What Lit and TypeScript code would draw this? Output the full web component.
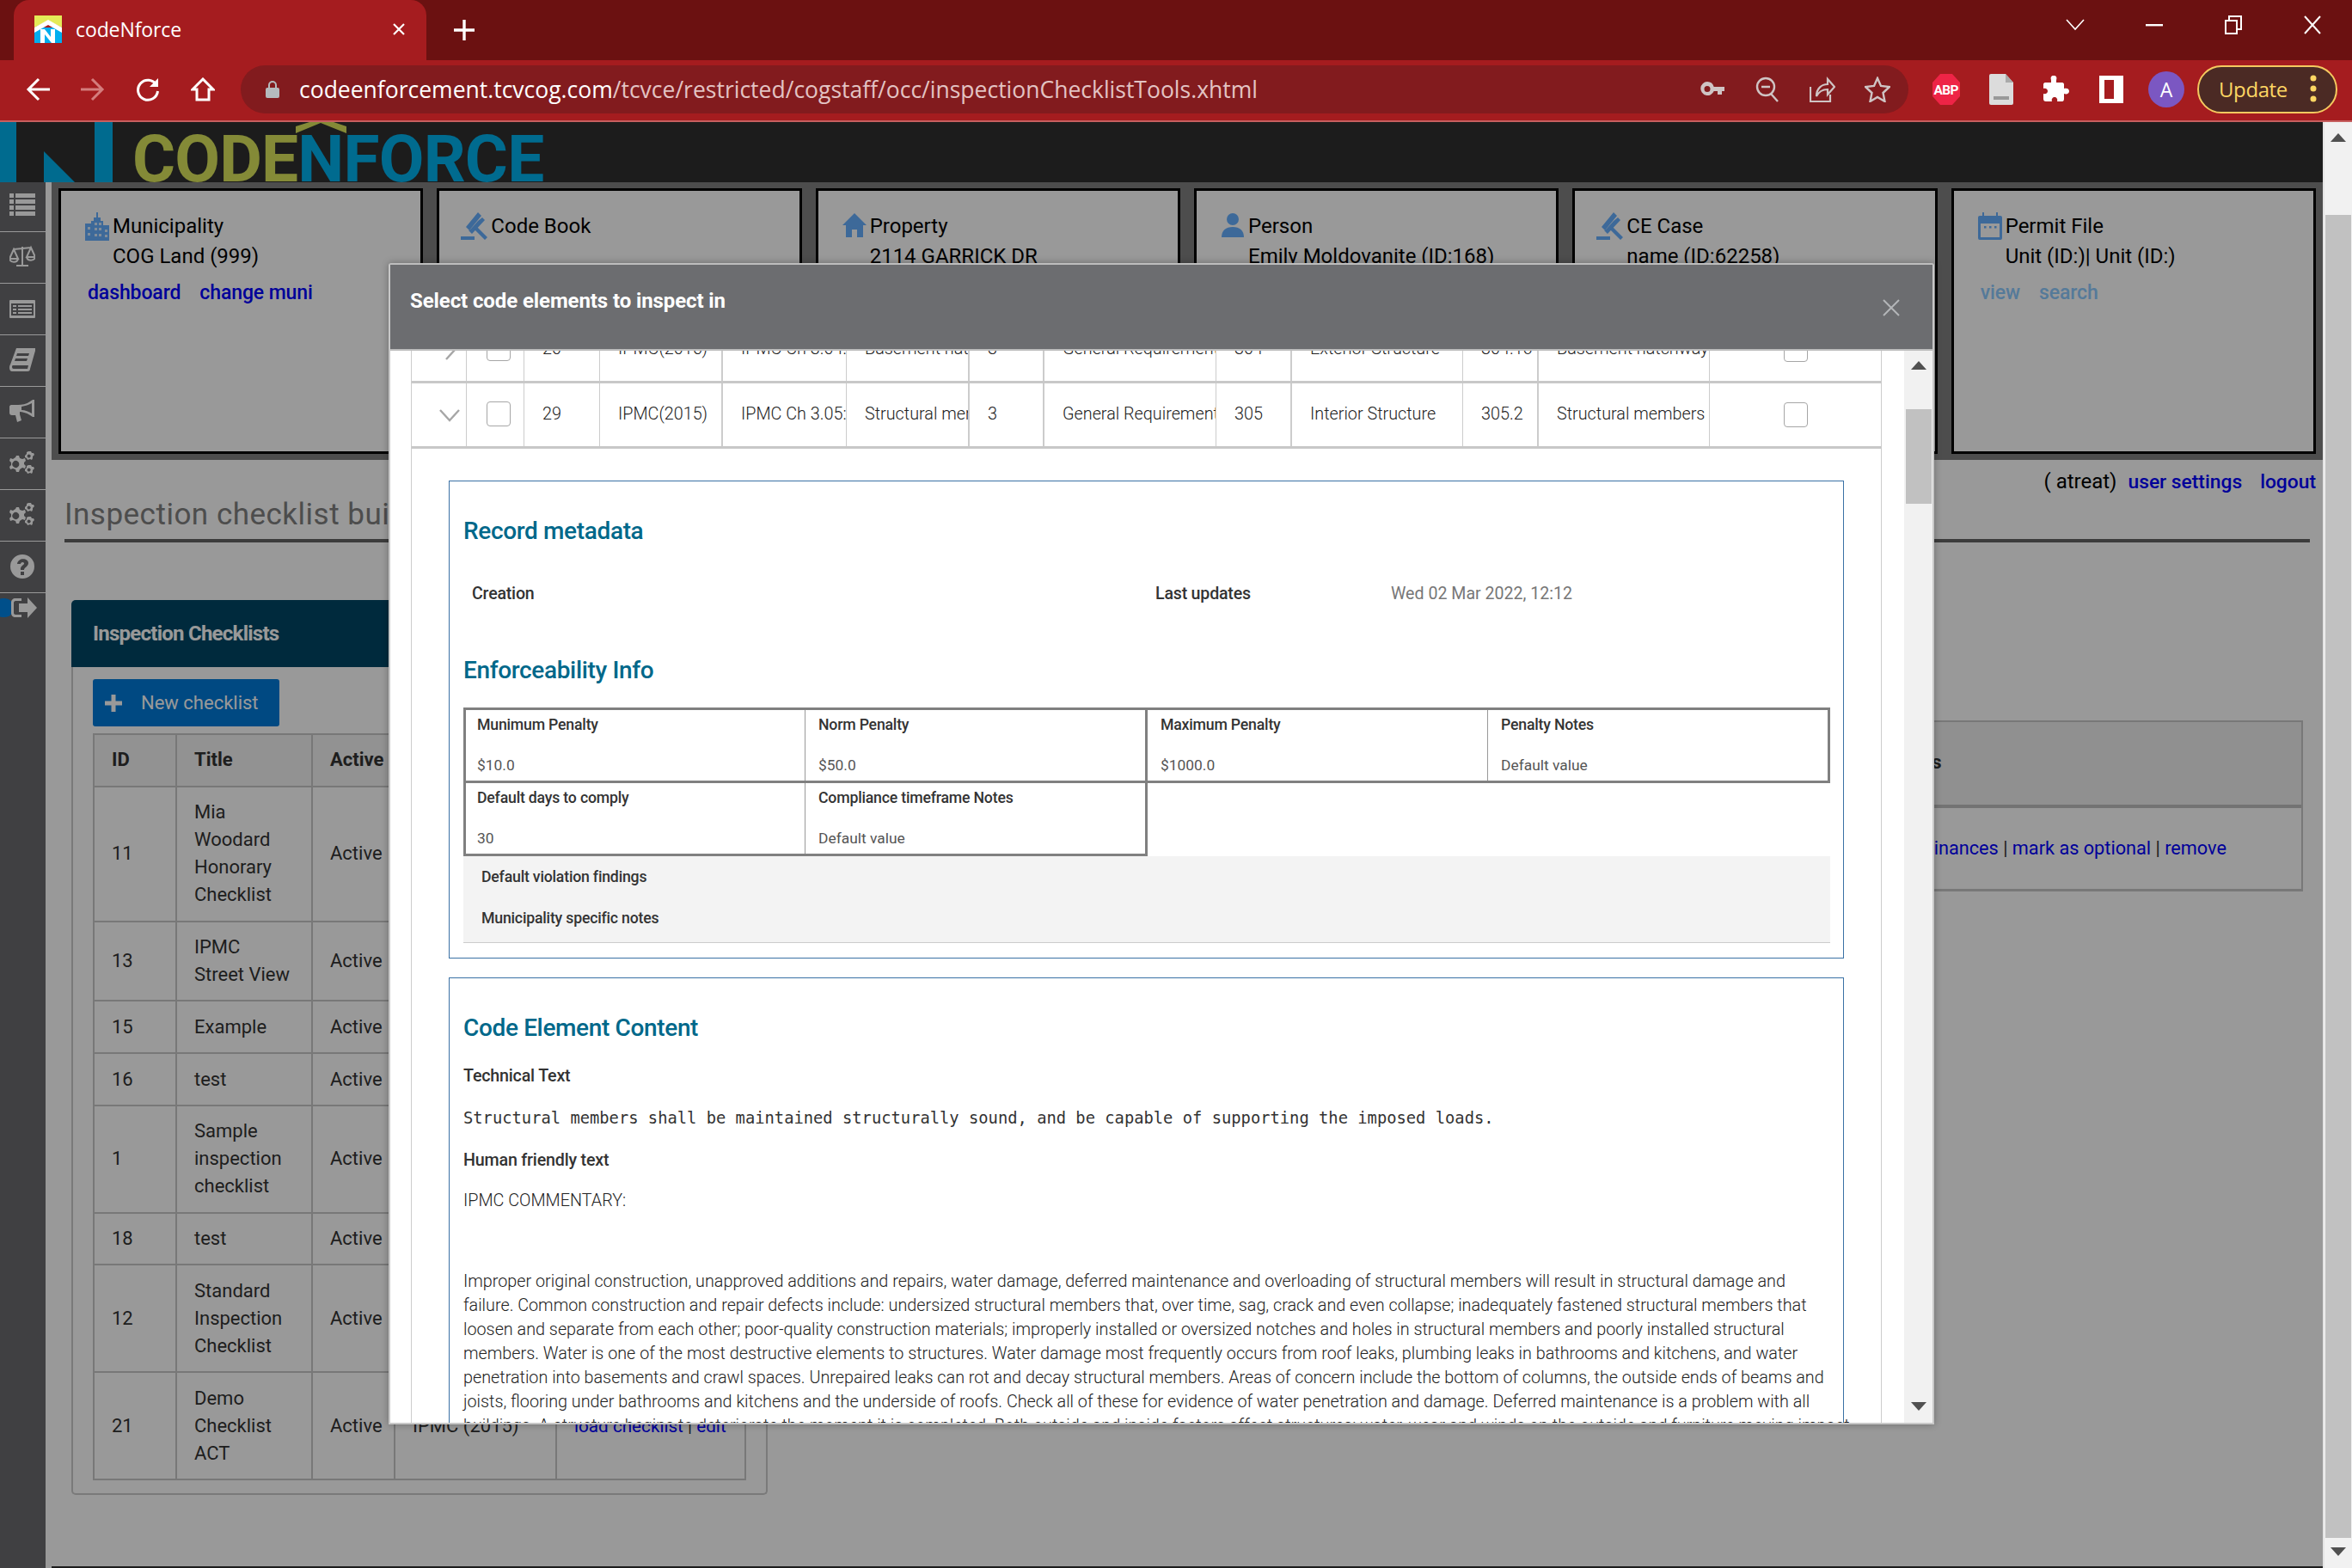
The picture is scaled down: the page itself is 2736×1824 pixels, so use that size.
import { LitElement, html, css, svg } from 'lit';
import { customElement } from 'lit/decorators.js';

const cards = [
  { icon: 'city', title: 'Municipality', value: 'COG Land (999)', links: ['dashboard', 'change muni'], dim: false },
  { icon: 'gavel', title: 'Code Book', value: '', links: [], dim: false },
  { icon: 'home', title: 'Property', value: '2114 GARRICK DR', links: [], dim: false },
  { icon: 'user', title: 'Person', value: 'Emily Moldovanite (ID:168)', links: [], dim: false },
  { icon: 'gavel', title: 'CE Case', value: 'name (ID:62258)', links: [], dim: false },
  { icon: 'calendar', title: 'Permit File', value: 'Unit (ID:)| Unit (ID:)', links: ['view', 'search'], dim: true },
];

const checklists = [
  ['11', ['Mia', 'Woodard', 'Honorary', 'Checklist']],
  ['13', ['IPMC', 'Street View']],
  ['15', ['Example']],
  ['16', ['test']],
  ['1', ['Sample', 'inspection', 'checklist']],
  ['18', ['test']],
  ['12', ['Standard', 'Inspection', 'Checklist']],
  ['21', ['Demo', 'Checklist', 'ACT']],
] as [string, string[]][];

const rowAbove = ['20', 'IPMC(2015)', 'IPMC Ch 3.04:', 'Basement hatchways', '3', 'General Requirements', '304', 'Exterior Structure', '304.16', 'Basement hatchways'];
const rowOpen = ['29', 'IPMC(2015)', 'IPMC Ch 3.05:', 'Structural members', '3', 'General Requirements', '305', 'Interior Structure', '305.2', 'Structural members'];

const commentary = [
  'Improper original construction, unapproved additions and repairs, water damage, deferred maintenance and overloading of structural members will result in structural damage and',
  'failure. Common construction and repair defects include: undersized structural members that, over time, sag, crack and even collapse; inadequately fastened structural members that',
  'loosen and separate from each other; poor-quality construction materials; improperly installed or oversized notches and holes in structural members and poorly installed structural',
  'members. Water is one of the most destructive elements to structures. Water damage most frequently occurs from roof leaks, plumbing leaks in bathrooms and kitchens, and water',
  'penetration into basements and crawl spaces. Unrepaired leaks can rot and decay structural members. Areas of concern include the bottom of columns, the outside ends of beams and',
  'joists, flooring under bathrooms and kitchens and the underside of roofs. Check all of these for evidence of water penetration and damage. Deferred maintenance is a problem with all',
  'buildings. A structure begins to deteriorate the moment it is completed. Both outside and inside factors affect structures: water, wear and winds on the outside and furniture moving impact',
];

const cardIcons: Record<string, unknown> = {
  city: svg`<path d="M0 13h7v-3h3V6h3V0h2v6h3v4h3v5h7v18H0z"/><g fill="#fff" opacity=".75"><rect x="3" y="17" width="3" height="3"/><rect x="3" y="24" width="3" height="3"/><rect x="11" y="12" width="3" height="3"/><rect x="16" y="12" width="3" height="3"/><rect x="11" y="18" width="3" height="3"/><rect x="16" y="18" width="3" height="3"/><rect x="11" y="25" width="3" height="3"/><rect x="16" y="25" width="3" height="3"/><rect x="23" y="20" width="3" height="3"/><rect x="23" y="26" width="3" height="3"/></g>`,
  gavel: svg`<path d="M21 0l4 4-14 17-4-4zM26 6l3 3-15 16-3-3-1 0 3-3 8-9z"/><path d="M18 15l14 14-3 3-14-14zM1 28h16v4H1z"/>`,
  home: svg`<path d="M14 1L0 15h4v14h7v-9h6v9h7V15h4z"/>`,
  user: svg`<circle cx="14" cy="8" r="7"/><path d="M1 29c0-8 5-12 13-12s13 4 13 12z"/>`,
  calendar: svg`<path d="M5 0h2v4h14V0h2v4h3a2 2 0 012 2v24a2 2 0 01-2 2H2a2 2 0 01-2-2V6a2 2 0 012-2h3zM3 13v16h22V13z"/><g><rect x="7" y="16" width="2.5" height="2.5"/><rect x="13" y="16" width="2.5" height="2.5"/><rect x="19" y="16" width="2.5" height="2.5"/></g>`,
};

const sideIcons = [
  svg`<path d="M0 2h5v5H0zM7 2h23v5H7zM0 9h5v5H0zM7 9h23v5H7zM0 16h5v5H0zM7 16h23v5H7zM0 23h5v5H0zM7 23h23v5H7z"/>`,
  svg`<g fill="none" stroke="currentColor" stroke-width="2"><path d="M15 3v21M8 25h14M5 6l20-2M5 6l-5 11h10zM25 4l-5 11h10z"/><path d="M0 17c1 5 9 5 10 0M20 15c1 5 9 5 10 0"/></g>`,
  svg`<path fill-rule="evenodd" d="M1 5h28a1 1 0 011 1v19a1 1 0 01-1 1H1a1 1 0 01-1-1V6a1 1 0 011-1zm1 4v14h26V9zm2 2h4v2H4zm6 0h16v2H10zm-6 4h4v2H4zm6 0h16v2H10zm-6 4h4v2H4zm6 0h16v2H10z"/>`,
  svg`<path fill-rule="evenodd" d="M8 1h22v3l-6 21c0 2-1 3-3 3H3c-2 0-3-2-3-4 0-1 0-3 1-4zm1 6l-1 3h14l1-3zm-2 6l-1 3h14l1-3zM3 22c0 1 0 3 2 3h16l1-4H5c-1 0-2 0-2 1z"/>`,
  svg`<path d="M27 1h2v20h-2l-3-2c-5-3-9-4-12-4v3l2 7-5 2-2-8-4 0c-2 0-3-1-3-3V9c0-1 1-2 2-2h8c4 0 10-1 14-4zm-1 4c-3 2-8 3-12 4v4c4 0 9 2 12 4zM30 8c1 1 1 5 0 6z"/>`,
  svg`<path d="M11 6l1 3 3 1 3-1 1 3-2 2v2l2 2-1 3-3-1-3 2-1 3H8l-1-3-3-1-3 1-1-3 2-2v-3l-2-2 1-3 3 1 3-2 1-2zm-1 7a4 4 0 100 6 4 4 0 000-6zM25 1l1 2 2 0 1 2-2 2 0 2-1 2-2-1-3 1-1-2-2-1 0-2 2-2 0-2 2-1zm-1 4a2 2 0 100 3 2 2 0 000-3zM25 17l1 2 2 0 1 2-2 2 0 2-1 2-2-1-3 1-1-2-2-1 0-2 2-2 0-2 2-1zm-1 4a2 2 0 100 3 2 2 0 000-3z"/>`,
  svg`<path d="M11 6l1 3 3 1 3-1 1 3-2 2v2l2 2-1 3-3-1-3 2-1 3H8l-1-3-3-1-3 1-1-3 2-2v-3l-2-2 1-3 3 1 3-2 1-2zm-1 7a4 4 0 100 6 4 4 0 000-6zM25 1l1 2 2 0 1 2-2 2 0 2-1 2-2-1-3 1-1-2-2-1 0-2 2-2 0-2 2-1zm-1 4a2 2 0 100 3 2 2 0 000-3zM25 17l1 2 2 0 1 2-2 2 0 2-1 2-2-1-3 1-1-2-2-1 0-2 2-2 0-2 2-1zm-1 4a2 2 0 100 3 2 2 0 000-3z"/>`,
  svg`<path fill-rule="evenodd" d="M15 1a14 14 0 110 28 14 14 0 010-28zm-6 11h4c0-2 3-3 4-1 1 2-5 3-4 8h4c0-3 5-4 5-8 0-6-12-7-13 1zm4 9v4h4v-4z"/>`,
  svg`<path d="M12 4H5C2 4 0 6 0 9v12c0 3 2 5 5 5h7v-3H5c-1 0-2-1-2-2V9c0-1 1-2 2-2h7zM19 3l11 12-11 12v-7H9v-10h10z"/>`,
];

@customElement('app-root')
export class AppRoot extends LitElement {
  static styles = css`
    :host {
      display: block;
      width: 2736px;
      height: 1824px;
      overflow: hidden;
      font-family: Roboto, "Liberation Sans", sans-serif;
      color: #333;
      background: #fff;
    }
    svg { display: block; }

    /* browser chrome */
    .tabstrip {
      height: 70px;
      background: #6b1111;
      display: flex;
      align-items: flex-end;
      color: #fff;
    }
    .tab {
      width: 480px;
      height: 70px;
      margin-left: 16px;
      background: #a51c1f;
      border-radius: 18px 18px 0 0;
      display: flex;
      align-items: center;
      box-sizing: border-box;
      padding: 0 24px 2px 24px;
      font: 23px "Open Sans", sans-serif;
      letter-spacing: -0.1px;
    }
    .tab-title { margin-left: 16px; flex: 1; }
    .newtab { width: 88px; height: 70px; display: flex; align-items: center; justify-content: center; }
    .winbtns { margin-left: auto; display: flex; height: 70px; }
    .winbtn { width: 92px; display: flex; align-items: center; justify-content: center; padding-bottom: 12px; box-sizing: border-box; }

    .toolbar {
      height: 72px;
      background: #a51c1f;
      border-bottom: 2px solid #c65f5f;
      box-sizing: border-box;
      display: flex;
      align-items: flex-start;
      padding: 6px 0 0 12px;
    }
    .tool { width: 64px; height: 56px; display: flex; align-items: center; justify-content: center; flex: none; }
    .omnibox {
      width: 1940px;
      height: 56px;
      margin-left: 12px;
      border-radius: 28px;
      background: #821b1e;
      display: flex;
      align-items: center;
      box-sizing: border-box;
      padding: 0 4px 0 29px;
    }
    .url {
      margin-left: 23px;
      flex: 1;
      font: 26.5px "Open Sans", sans-serif;
      letter-spacing: 0;
      color: #e3c3c3;
      white-space: nowrap;
    }
    .url b { font-weight: 400; color: #fff; }
    .exts { margin-left: 12px; display: flex; }
    .avatar {
      width: 42px; height: 42px; border-radius: 50%;
      background: #7b57c2; color: #fff;
      display: flex; align-items: center; justify-content: center;
      font: 23px "Open Sans", sans-serif;
    }
    .update {
      width: 163px; height: 56px;
      margin-left: 4px;
      box-sizing: border-box;
      border: 2px solid #f5c95f;
      border-radius: 28px;
      background: #4b2a24;
      color: #fdd663;
      display: flex; align-items: center;
      padding: 0 0 2px 23px;
      font: 24px "Open Sans", sans-serif;
      letter-spacing: -0.4px;
    }
    .update svg { margin-left: 26px; }

    /* page */
    .viewport { display: flex; height: 1682px; }
    .page { position: relative; width: 2702px; flex: none; overflow: hidden; background: #fff; }
    .pagebar {
      flex: 1;
      background: #f1f1f1;
      border-left: 2px solid #e4e4e4;
      display: flex;
      flex-direction: column;
      align-items: center;
    }
    .arrow-up { width: 0; height: 0; border: 9px solid transparent; border-top: 0; border-bottom: 10px solid #505050; }
    .arrow-down { width: 0; height: 0; border: 9px solid transparent; border-bottom: 0; border-top: 10px solid #505050; }
    .pagebar .arrow-up { margin-top: 13px; }
    .pagebar .thumb { width: 30px; height: 1539px; margin: 85px 0 0; background: #c1c1c1; }
    .pagebar .arrow-down { margin-top: 11px; }

    .masthead {
      height: 70px;
      box-sizing: border-box;
      background: #2f2f2f;
      display: flex;
      overflow: hidden;
      position: relative;
    }
    .masthead svg { position: absolute; left: 0; top: 0; }
    .wordmark {
      margin: 4px 0 0 154px;
      font: 700 76.5px/78px Roboto, sans-serif;
      letter-spacing: -0.8px;
      color: #00b2ee;
    }
    .wordmark span { color: #dce65d; }

    .layout { display: flex; height: 1612px; }
    .side { width: 53px; flex: none; background: #6b6b6e; color: #fff; }
    .side-item {
      height: 60px;
      border-bottom: 1px solid #fff;
      box-sizing: border-box;
      display: flex;
      align-items: center;
      padding: 0 0 2px 11px;
      position: relative;
    }
    .side-item:nth-child(1) { height: 58px; padding-bottom: 5px; }
    .side-item:last-child { border: 0; height: 36px; padding-left: 13px; }
    .side-pill { position: absolute; left: -8px; top: 6px; width: 24px; height: 22px; border-radius: 11px; background: #0084e6; }
    .side-item svg { position: relative; }

    .main { flex: 1; min-width: 0; margin-left: 7px; display: flex; flex-direction: column; }
    .band {
      height: 323px;
      flex: none;
      background: #808080;
      box-sizing: border-box;
      padding: 7px 8px;
      display: grid;
      grid-template-columns: repeat(6, 1fr);
      gap: 16px;
    }
    .card {
      border: 3px solid #000;
      background: #fff;
      color: #000;
      font-size: 24px;
      line-height: 35px;
      padding-top: 24px;
    }
    .card-head { display: flex; align-items: center; padding-left: 28px; color: #000; }
    .card-head svg { margin-right: 4px; color: #66b0ff; fill: currentColor; }
    .card-head svg.wide { margin-left: -4px; }
    .card-value { padding-left: 60px; }
    .card-links { display: flex; gap: 22px; margin-top: 7px; padding-left: 31px; font-size: 23px; font-weight: 500; letter-spacing: -0.1px; color: #00f; }
    .card-links.dim { color: #8ecbff; gap: 22px; }

    .userline {
      display: flex;
      justify-content: flex-end;
      gap: 13px;
      height: 50px;
      flex: none;
      align-items: center;
      padding-right: 8px;
      font-size: 24px;
      color: #000;
      box-sizing: border-box;
    }
    .userline a { color: #00f; font-size: 22.8px; font-weight: 500; }
    .userline a + a { margin-left: 8px; }
    .title {
      margin: -15px 15px 0 15px;
      height: 57px;
      flex: none;
      font-size: 35px;
      font-weight: 400;
      line-height: 58px;
      color: #808080;
      border-bottom: 4px solid #646464;
      letter-spacing: 0.5px;
    }
    .columns { display: flex; margin-top: 67px; justify-content: space-between; padding: 0 23px; }
    .panel { width: 810px; flex: none; }
    .panel-head {
      height: 78px;
      background: #004766;
      border-radius: 5px 5px 0 0;
      color: #fff;
      font-size: 24px;
      font-weight: 700;
      padding-left: 25px;
      line-height: 78px;
      letter-spacing: -0.75px;
    }
    .panel-body {
      border: 2px solid #ccc;
      border-top: 0;
      border-radius: 0 0 5px 5px;
      padding: 14px 25px 15px 23px;
    }
    .new-btn {
      width: 217px; height: 55px;
      border-radius: 3px;
      background: #007ad9;
      color: #fff;
      display: flex;
      align-items: center;
      font-size: 22px;
      font-weight: 400;
      box-sizing: border-box;
      padding-left: 14px;
      gap: 22px;
      margin-bottom: 8px;
    }
    table { border-collapse: collapse; table-layout: fixed; width: 758px; font-size: 22px; line-height: 32px; font-weight: 400; color: #333; }
    th, td { border: 2px solid #c8c8c8; padding: 13.4px 20px; text-align: left; white-space: nowrap; overflow: hidden; }
    th { background: #f4f4f4; font-weight: 700; }
    td.links { font-size: 20.7px; }
    td a { color: #00f; }
    .right-table { width: 1400px; flex: none; align-self: flex-start; margin-top: 140px; border: 2px solid #c8c8c8; border-bottom-width: 3px; }
    .right-head { height: 96px; background: #f0f0f0; border-bottom: 4px solid #c0c0c0; font-weight: 700; font-size: 22px; line-height: 94px; padding-left: 906px; color: #333; }
    .right-row { height: 94px; line-height: 94px; font-size: 21.7px; padding-left: 892px; white-space: nowrap; }
    .right-row a { color: #00f; }
    .footer { margin-top: auto; height: 2px; flex: none; background: #2f2f2f; }

    .scrim { position: absolute; inset: 0; background: rgba(0, 0, 0, 0.4); }

    /* dialog */
    .dialog {
      position: absolute;
      left: 452px;
      top: 164px;
      width: 1798px;
      height: 1351px;
      box-sizing: border-box;
      border: 2px solid #c8c8c8;
      border-top-color: #bdbdbd;
      border-radius: 3px 3px 0 0;
      background: #fff;
      display: flex;
      flex-direction: column;
      box-shadow: 0 0 8px rgba(0, 0, 0, 0.3);
    }
    .dialog-head {
      height: 100px;
      flex: none;
      background: #6c6d70;
      color: #fff;
      position: relative;
      padding: 27px 23px 0;
      box-sizing: border-box;
      font-size: 24px;
      font-weight: 700;
      letter-spacing: -0.1px;
      line-height: 30px;
      border-bottom: 2px solid #bdbdbd;
    }
    .dialog-close { position: absolute; right: 38px; top: 40px; }
    .dialog-body { flex: 1; min-height: 0; display: flex; }
    .sheet { width: 1761px; flex: none; overflow: hidden; padding: 0 26px 0 24px; box-sizing: border-box; }
    .sheet-inner { border: solid #ccc; border-width: 0 1px; margin-top: -38px; height: 1400px; box-sizing: border-box; }
    .dialog-bar { flex: 1; background: #f1f1f1; display: flex; flex-direction: column; align-items: center; }
    .dialog-bar .arrow-up { margin-top: 12px; }
    .dialog-bar .thumb { width: 30px; height: 110px; margin-top: 46px; background: #c1c1c1; }
    .dialog-bar .arrow-down { margin-top: auto; margin-bottom: 14px; }

    .row {
      height: 76px;
      box-sizing: border-box;
      display: grid;
      grid-template-columns: 64px 67px 88px 143px 144px 143px 87px 200px 88px 199px 88px 199px 1fr;
      border-bottom: 3px solid #c8c8c8;
      font-size: 19.8px;
      font-weight: 300;
      color: #222;
    }
    .cell {
      border-right: 1px solid #ccc;
      padding: 0 0 2px 21px;
      display: flex;
      align-items: center;
      overflow: hidden;
      white-space: nowrap;
      box-sizing: border-box;
    }
    .cell:nth-child(4), .cell:nth-child(6), .cell:nth-child(7), .cell:nth-child(9), .cell:nth-child(11) { border-right-width: 2px; }
    .cell:last-child { border-right: 0; justify-content: center; padding: 0; }
    .cell.chevron { justify-content: flex-end; padding: 0 7px 0 0; }
    .cell.tick { justify-content: flex-start; padding: 0 0 2px 23px; }
    .check { width: 28px; height: 29px; box-sizing: border-box; border: 1px solid #a6a6a6; border-radius: 4px; background: #fff; }

    .box { margin: 0 43px; border: 1px solid #3a71a5; padding: 0 16px; }
    .box-meta { margin-top: 37px; height: 556px; box-sizing: border-box; padding-top: 42px; }
    .box-code { margin-top: 22px; padding-top: 42px; }
    h2 { margin: 0; font-size: 28px; line-height: 32px; font-weight: 500; color: #00688a; letter-spacing: -0.35px; }
    .meta { margin-top: 45px; display: grid; grid-template-columns: 795px 274px 1fr; padding-left: 10px; font-size: 19.6px; line-height: 24px; }
    .meta b, .strong { font-weight: 500; color: #333; letter-spacing: -0.2px; }
    .meta span { color: #777; }
    .box-meta h2 + .meta + h2 { margin-top: 61px; }

    .pens { margin-top: 27px; }
    .pen-row { display: grid; grid-template-columns: 395px 398px 396px 1fr; border: 3px solid #808080; height: 88px; box-sizing: border-box; width: 1590px; }
    .pen-row.short { grid-template-columns: 395px 1fr; border-top: 0; width: 796px; height: 85px; }
    .pen-cell { display: flex; flex-direction: column; justify-content: space-between; padding: 7px 0 8px 15px; border-right: 1px solid #999; line-height: 20px; box-sizing: border-box; }
    .pen-cell:first-child { padding-left: 13px; }
    .pen-cell:nth-child(2) { border-right: 3px solid #808080; }
    .pen-cell:last-child { border-right: 0; }
    .short .pen-cell:nth-child(2) { border-right: 0; }
    .pen-cell b { font-size: 17.7px; font-weight: 500; color: #333; letter-spacing: -0.2px; }
    .pen-cell span { color: #555; font-size: 17.4px; }
    .notes { background: #f3f3f3; border-bottom: 1px solid #ccc; height: 101px; width: 1590px; box-sizing: border-box; padding: 12px 0 0 21px; font-size: 17.7px; font-weight: 500; line-height: 24px; color: #333; letter-spacing: -0.2px; }
    .notes div + div { margin-top: 24px; }

    .strong { display: block; font-size: 19.7px; line-height: 24px; }
    .strong.first { margin-top: 28px; }
    .mono { font: 18.8px/24px "DejaVu Sans Mono", monospace; color: #333; margin: 25px 0; white-space: nowrap; }
    .commentary-head { font-size: 19.8px; line-height: 24px; margin-top: 23px; font-weight: 300; color: #222; }
    .commentary { margin-top: 68px; font-size: 19.8px; line-height: 28px; font-weight: 300; color: #222; white-space: nowrap; }
  `;

  renderCells(cells: string[], open: boolean) {
    return html`
      <div class="cell chevron">
        ${open
          ? html`<svg width="24" height="24" viewBox="0 0 24 24" fill="none" stroke="#a6a6a6" stroke-width="2.4"><path d="M1 6l11 12L23 6"/></svg>`
          : html`<svg width="24" height="24" viewBox="0 0 24 24" fill="none" stroke="#a6a6a6" stroke-width="2.4"><path d="M8 1l10 11L8 23"/></svg>`}
      </div>
      <div class="cell tick"><div class="check"></div></div>
      ${cells.map((c) => html`<div class="cell">${c}</div>`)}
      <div class="cell"><div class="check"></div></div>
    `;
  }

  renderChrome() {
    return html`
      <div class="tabstrip">
        <div class="tab">
          <svg width="32" height="32" viewBox="0 0 32 32">
            <rect y="14" width="32" height="18" fill="#00aeef"/>
            <path d="M0 14L16 6l16 8V0H0z" fill="#e4ea58"/>
            <path d="M0 14L16 5l16 9v6L16 11 0 20z" fill="#fff"/>
            <path d="M7 32V16h5l7 9v-9h5v16h-4l-8-10v10z" fill="#fff"/>
          </svg>
          <span class="tab-title">codeNforce</span>
          <svg width="16" height="16" viewBox="0 0 16 16" stroke="#fff" stroke-width="2.2"><path d="M2 2l12 12M14 2L2 14"/></svg>
        </div>
        <div class="newtab">
          <svg width="24" height="24" viewBox="0 0 24 24" stroke="#fff" stroke-width="3.4"><path d="M12 0v24M0 12h24"/></svg>
        </div>
        <div class="winbtns">
          <div class="winbtn"><svg width="22" height="14" viewBox="0 0 22 14" fill="none" stroke="#fff" stroke-width="1.6"><path d="M1 1l10 11L21 1"/></svg></div>
          <div class="winbtn"><svg width="20" height="3" viewBox="0 0 20 3" fill="#fff"><rect width="20" height="2.4"/></svg></div>
          <div class="winbtn"><svg width="20" height="22" viewBox="0 0 20 22" fill="none" stroke="#fff" stroke-width="2"><path d="M1 6h13v15H1zM5 6V1h14v15h-5"/></svg></div>
          <div class="winbtn"><svg width="20" height="22" viewBox="0 0 20 22" fill="none" stroke="#fff" stroke-width="2"><path d="M1 1l18 20M19 1L1 21"/></svg></div>
        </div>
      </div>
      <div class="toolbar">
        <div class="tool"><svg width="28" height="28" viewBox="0 0 28 28" fill="none" stroke="#fff" stroke-width="3"><path d="M28 14H3M15 2L3 14l12 12"/></svg></div>
        <div class="tool"><svg width="28" height="28" viewBox="0 0 28 28" fill="none" stroke="#d47d7d" stroke-width="3"><path d="M0 14h25M13 2l12 12-12 12"/></svg></div>
        <div class="tool"><svg width="28" height="28" viewBox="0 0 28 28" fill="none" stroke="#fff" stroke-width="3"><path d="M24 9a11.5 11.5 0 10 1.5 7"/><path d="M26 1v10H16" fill="#fff" stroke="none"/></svg></div>
        <div class="tool"><svg width="28" height="28" viewBox="0 0 28 28" fill="none" stroke="#fff" stroke-width="3"><path d="M14 2L2 14h5v12h14V14h5z"/></svg></div>
        <div class="omnibox">
          <svg width="16" height="20" viewBox="0 0 16 20" fill="#b5babd"><path d="M3 8V5a5 5 0 0110 0v3h1a2 2 0 012 2v8a2 2 0 01-2 2H2a2 2 0 01-2-2v-8a2 2 0 012-2zm2 0h6V5a3 3 0 00-6 0z"/></svg>
          <div class="url"><b>codeenforcement.tcvcog.com</b>/tcvce/restricted/cogstaff/occ/inspectionChecklistTools.xhtml</div>
          <div class="tool"><svg width="28" height="18" viewBox="0 0 28 18" fill="#cfc4c4"><path fill-rule="evenodd" d="M8 0a8 8 0 017.7 6H28v5h-3v4h-5v-4h-4.300A8 8 0 118 0zm0 5a3.500 3.500 0 100 7 3.500 3.500 0 000-7z"/></svg></div>
          <div class="tool"><svg width="28" height="30" viewBox="0 0 28 30" fill="none" stroke="#cfc4c4" stroke-width="2.4"><circle cx="12" cy="12" r="10"/><path d="M7 12h10M18 20l8 9"/></svg></div>
          <div class="tool"><svg width="30" height="30" viewBox="0 0 30 30" fill="none" stroke="#cfc4c4" stroke-width="2.2"><path d="M1 12v17h23v-8M8 23c0-9 6-14 13-14V3l8 9-8 9v-6c-5 0-10 2-13 8z"/></svg></div>
          <div class="tool"><svg width="30" height="30" viewBox="0 0 30 30" fill="none" stroke="#cfc4c4" stroke-width="2.4"><path d="M15 2l4 9 10 1-7.500 7 2 10L15 24l-8.500 5 2-10L1 12l10-1z"/></svg></div>
        </div>
        <div class="exts">
          <div class="tool"><svg width="32" height="36" viewBox="0 0 32 36"><path d="M9 0h14l9 10v16l-9 10H9L0 26V10z" fill="#ee2446"/><text x="16" y="24" text-anchor="middle" font-family="Roboto, sans-serif" font-weight="700" font-size="15.500" fill="#fff" textLength="29">ABP</text></svg></div>
          <div class="tool"><svg width="28" height="36" viewBox="0 0 28 36"><path d="M2 0h17l9 10v24a2 2 0 01-2 2H2a2 2 0 01-2-2V2a2 2 0 012-2z" fill="#dcdcdc"/><path d="M19 0l9 10h-9z" fill="#aaa"/><rect x="5" y="26" width="18" height="4" fill="#999"/></svg></div>
          <div class="tool"><svg width="30" height="32" viewBox="0 0 30 32" fill="#fff"><path d="M12 0c3 0 4 2 3 5v3h7c1 0 2 1 2 2v5c3-1 6 0 6 3s-3 4-6 3v6c0 2-1 3-2 3h-6c1-3-1-5-3-5s-4 2-3 5H3c-2 0-3-1-3-3v-6c3 1 5-1 5-3s-2-4-5-3V10c0-1 1-2 2-2h7V5c-1-3 0-5 3-5z"/></svg></div>
          <div class="tool"><svg width="28" height="32" viewBox="0 0 28 32" fill="#fff"><path fill-rule="evenodd" d="M0 0h28v32H0zm6 5v22h11V5z"/></svg></div>
          <div class="tool"><div class="avatar">A</div></div>
        </div>
        <div class="update">
          Update
          <svg width="8" height="40" viewBox="0 0 8 40" fill="#fdd663"><circle cx="4" cy="8" r="3.500"/><circle cx="4" cy="20" r="3.500"/><circle cx="4" cy="32" r="3.500"/></svg>
        </div>
      </div>
    `;
  }

  renderCardIcon(icon: string) {
    if (icon === 'gavel') {
      return html`<svg class="wide" width="32" height="33" viewBox="0 0 32 33">${cardIcons[icon]}</svg>`;
    }
    return html`<svg width="28" height="33" viewBox="0 0 28 33">${cardIcons[icon]}</svg>`;
  }

  renderPage() {
    return html`
      <div class="masthead">
        <svg width="420" height="70" viewBox="0 0 420 70">
          <path d="M0 0h19v70H0zM51 34l36 36H51zM110 0h21v70h-21z" fill="#00b2ee"/>
          <path d="M344 13V5l16-5h28l15 5v8l-30-12z" fill="#dce65d"/>
        </svg>
        <div class="wordmark"><span>CODE</span>NFORCE</div>
      </div>
      <div class="layout">
        <div class="side">
          ${sideIcons.map((icon, i) => html`
            <div class="side-item">
              ${i === sideIcons.length - 1 ? html`<div class="side-pill"></div>` : ''}
              <svg width="30" height="30" viewBox="0 0 30 30" fill="currentColor">${icon}</svg>
            </div>`)}
        </div>
        <div class="main">
          <div class="band">
            ${cards.map((c) => html`
              <div class="card">
                <div class="card-head">${this.renderCardIcon(c.icon)}${c.title}</div>
                <div class="card-value">${c.value}</div>
                <div class="card-links ${c.dim ? 'dim' : ''}">${c.links.map((l) => html`<span>${l}</span>`)}</div>
              </div>`)}
          </div>
          <div class="userline"><span>( atreat)</span><a>user settings</a><a>logout</a></div>
          <div class="title">Inspection checklist builder</div>
          <div class="columns">
            <div class="panel">
              <div class="panel-head">Inspection Checklists</div>
              <div class="panel-body">
                <div class="new-btn">
                  <svg width="20" height="20" viewBox="0 0 20 20" fill="#fff"><path d="M7.500 0h5v7.500H20v5h-7.500V20h-5v-7.500H0v-5h7.500z"/></svg>
                  New checklist
                </div>
                <table>
                  <colgroup><col width="96"><col width="158"><col width="96"><col width="188"><col width="220"></colgroup>
                  <tr><th>ID</th><th>Title</th><th>Active</th><th>Ruleset</th><th>Actions</th></tr>
                  ${checklists.map(([id, title]) => html`
                    <tr>
                      <td>${id}</td>
                      <td>${title.map((t) => html`${t}<br>`)}</td>
                      <td>Active</td>
                      <td>IPMC (2015)</td>
                      <td class="links"><a>load checklist</a> | <a>edit</a></td>
                    </tr>`)}
                </table>
              </div>
            </div>
            <div class="right-table">
              <div class="right-head">Actions</div>
              <div class="right-row"><a>view ordinances</a> | <a>mark as optional</a> | <a>remove</a></div>
            </div>
          </div>
          <div class="footer"></div>
        </div>
      </div>
      <div class="scrim"></div>
      ${this.renderDialog()}
    `;
  }

  renderDialog() {
    return html`
      <div class="dialog">
        <div class="dialog-head">
          Select code elements to inspect in
          <svg class="dialog-close" width="20" height="20" viewBox="0 0 20 20" fill="none" stroke="#b4b6b8" stroke-width="2"><path d="M1 1l18 18M19 1L1 19"/></svg>
        </div>
        <div class="dialog-body">
          <div class="sheet">
            <div class="sheet-inner">
              <div class="row">${this.renderCells(rowAbove, false)}</div>
              <div class="row">${this.renderCells(rowOpen, true)}</div>
              <div class="box box-meta">
                <h2>Record metadata</h2>
                <div class="meta"><b>Creation</b><b>Last updates</b><span>Wed 02 Mar 2022, 12:12</span></div>
                <h2>Enforceability Info</h2>
                <div class="pens">
                  <div class="pen-row">
                    <div class="pen-cell"><b>Munimum Penalty</b><span>$10.0</span></div>
                    <div class="pen-cell"><b>Norm Penalty</b><span>$50.0</span></div>
                    <div class="pen-cell"><b>Maximum Penalty</b><span>$1000.0</span></div>
                    <div class="pen-cell"><b>Penalty Notes</b><span>Default value</span></div>
                  </div>
                  <div class="pen-row short">
                    <div class="pen-cell"><b>Default days to comply</b><span>30</span></div>
                    <div class="pen-cell"><b>Compliance timeframe Notes</b><span>Default value</span></div>
                  </div>
                </div>
                <div class="notes">
                  <div>Default violation findings</div>
                  <div>Municipality specific notes</div>
                </div>
              </div>
              <div class="box box-code">
                <h2>Code Element Content</h2>
                <div class="strong first">Technical Text</div>
                <div class="mono">Structural members shall be maintained structurally sound, and be capable of supporting the imposed loads.</div>
                <div class="strong">Human friendly text</div>
                <div class="commentary-head">IPMC COMMENTARY:</div>
                <div class="commentary">${commentary.map((l) => html`<div>${l}</div>`)}</div>
              </div>
            </div>
          </div>
          <div class="dialog-bar">
            <div class="arrow-up"></div>
            <div class="thumb"></div>
            <div class="arrow-down"></div>
          </div>
        </div>
      </div>
    `;
  }

  render() {
    return html`
      ${this.renderChrome()}
      <div class="viewport">
        <div class="page">${this.renderPage()}</div>
        <div class="pagebar">
          <div class="arrow-up"></div>
          <div class="thumb"></div>
          <div class="arrow-down"></div>
        </div>
      </div>
    `;
  }
}
